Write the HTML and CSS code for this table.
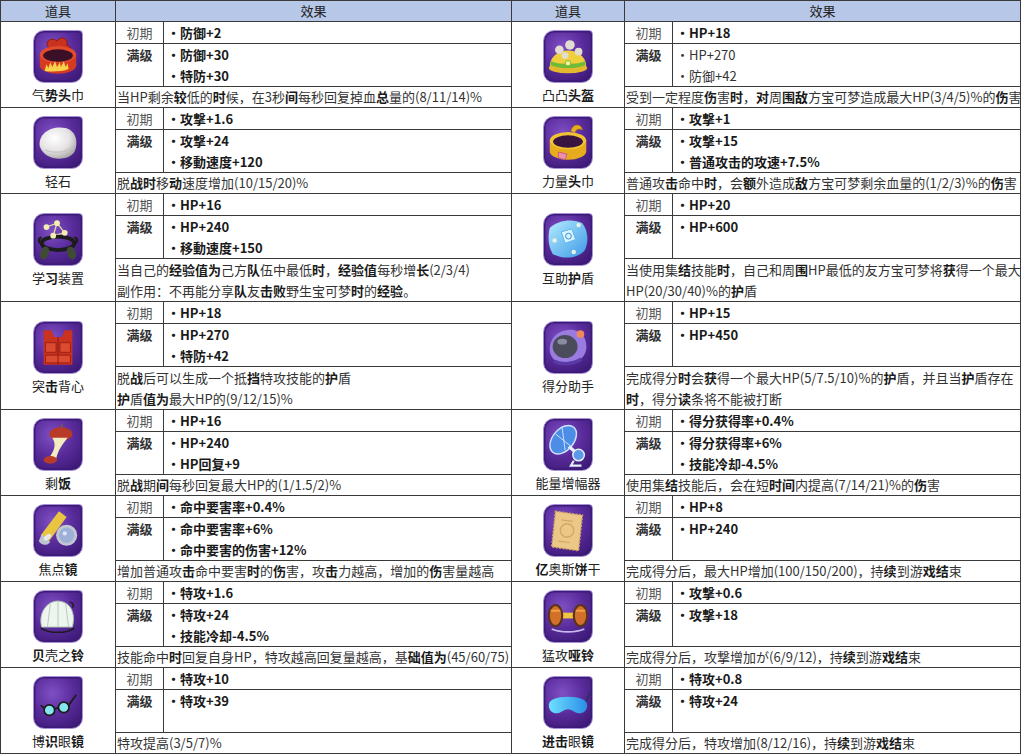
FILE: index.html
```html
<!DOCTYPE html>
<html lang="zh-CN">
<head>
<meta charset="utf-8">
<title>道具效果</title>
<link rel="stylesheet" href="styles.css">
</head>
<body>
<div class="page">

<section class="half left">
  <div class="head"><div>道具</div><div>效果</div></div>

  <div class="item">
    <div class="thumb">
      <div class="icon"><svg viewBox="0 0 50 52"><path d="M15 17c-5-7 4-12 9-7 3-6 13-3 10 4 6 1 5 8-1 8" fill="#c8321f" stroke="#8d1a10" stroke-width="1"/><path d="M6 24v11a19 9 0 0 0 38 0V24z" fill="#d63b22"/><ellipse cx="25" cy="24" rx="19" ry="9" fill="#e24a2c"/><ellipse cx="25" cy="25" rx="15.5" ry="6.5" fill="#3b0f26"/><path d="M11 41l2-7 2 4 2-6 2 5 3-6 2 6 3-5 1 5 3-6 2 6 2-4 1 6c-7 3-19 3-25 2z" fill="#f7d24a"/></svg></div>
      <div class="name">气<b>势头</b>巾</div>
    </div>
    <div class="lab">初期</div><div class="val">・防御+2</div>
    <div class="lab"><b>满级</b></div><div class="val">・防御+30<br>・特防+30</div>
    <div class="desc">当HP剩余<b>较</b>低的<b>时</b>候，在3秒<b>间</b>每秒回复掉血<b>总</b>量的(8/11/14)%</div>
  </div>

  <div class="item">
    <div class="thumb">
      <div class="icon"><svg viewBox="0 0 50 52"><defs><radialGradient id="st" cx="40%" cy="35%" r="70%"><stop offset="0" stop-color="#ffffff"/><stop offset="0.6" stop-color="#e4e2e2"/><stop offset="1" stop-color="#a9a6a8"/></radialGradient></defs><path d="M6 30C4 16 19 8 33 11c12 3 13 17 9 25-6 10-31 10-36-6z" fill="url(#st)"/><path d="M12 34c7 3 18 3 25-1" stroke="#c9c6c8" stroke-width="1.5" fill="none"/></svg></div>
      <div class="name">轻石</div>
    </div>
    <div class="lab">初期</div><div class="val">・攻撃+1.6</div>
    <div class="lab"><b>满级</b></div><div class="val">・攻撃+24<br>・移動速度+120</div>
    <div class="desc">脱<b>战时</b>移<b>动</b>速度增加(10/15/20)%</div>
  </div>

  <div class="item tall">
    <div class="thumb">
      <div class="icon"><svg viewBox="0 0 50 52"><g stroke="#e8e2a0" stroke-width="1.3"><path d="M13 13L24 9L20 22L32 19L24 9" fill="none"/></g><ellipse cx="25" cy="30" rx="17" ry="7" fill="none" stroke="#1c1c1c" stroke-width="4"/><circle cx="13" cy="13" r="3" fill="#f3eeb2"/><circle cx="24" cy="9" r="3" fill="#f3eeb2"/><circle cx="20" cy="22" r="3" fill="#f3eeb2"/><circle cx="32" cy="19" r="3" fill="#f3eeb2"/><ellipse cx="11" cy="40" rx="4.5" ry="7" fill="#3f4b35" transform="rotate(20 11 40)"/><ellipse cx="39" cy="40" rx="4.5" ry="7" fill="#3f4b35" transform="rotate(-20 39 40)"/><path d="M8 24c-3 0-4 4-1 6M42 24c3 0 4 4 1 6" stroke="#1c1c1c" stroke-width="2.5" fill="none"/></svg></div>
      <div class="name">学<b>习</b>装置</div>
    </div>
    <div class="lab">初期</div><div class="val">・HP+16</div>
    <div class="lab"><b>满级</b></div><div class="val">・HP+240<br>・移動速度+150</div>
    <div class="desc">当自己的<b>经验值为</b>己方<b>队</b>伍中最低<b>时</b>，<b>经验值</b>每秒增<b>长</b>(2/3/4)<br>副作用：不再能分享<b>队</b>友<b>击败</b>野生宝可梦<b>时</b>的<b>经验</b>。</div>
  </div>

  <div class="item tall">
    <div class="thumb">
      <div class="icon"><svg viewBox="0 0 50 52"><path d="M10 8h8l3 7h8l3-7h8v36H10z" fill="#c8321f"/><path d="M12 21h11v10H12zM27 21h11v10H27zM12 34h26v8H12z" fill="#dc4a30" stroke="#8d1a10" stroke-width="0.8"/><path d="M25 15v29" stroke="#8d1a10" stroke-width="1"/></svg></div>
      <div class="name">突<b>击</b>背心</div>
    </div>
    <div class="lab">初期</div><div class="val">・HP+18</div>
    <div class="lab"><b>满级</b></div><div class="val">・HP+270<br>・特防+42</div>
    <div class="desc">脱<b>战</b>后可以生成一个抵<b>挡</b>特攻技能的<b>护</b>盾<br><b>护</b>盾<b>值为</b>最大HP的(9/12/15)%</div>
  </div>

  <div class="item">
    <div class="thumb">
      <div class="icon"><svg viewBox="0 0 50 52"><path d="M29 5c0 3 0 5-2 7" stroke="#7a5a3a" stroke-width="1.5" fill="none"/><ellipse cx="28" cy="15" rx="12" ry="7" fill="#b83a28"/><path d="M19 19c4 6 3 12-2 19l-3 4h9c1-7 4-13 12-23z" fill="#f3ecc0"/><ellipse cx="17" cy="42" rx="7" ry="4" fill="#b83a28"/></svg></div>
      <div class="name">剩<b>饭</b></div>
    </div>
    <div class="lab">初期</div><div class="val">・HP+16</div>
    <div class="lab"><b>满级</b></div><div class="val">・HP+240<br>・HP回复+9</div>
    <div class="desc">脱<b>战</b>期<b>间</b>每秒回复最大HP的(1/1.5/2)%</div>
  </div>

  <div class="item">
    <div class="thumb">
      <div class="icon"><svg viewBox="0 0 50 52"><path d="M7 31L26 6l8 6-19 26z" fill="#e8c440"/><path d="M8 30l9 8c-4 5-10 3-12-1z" fill="#bcc4cf"/><ellipse cx="14" cy="33" rx="4.5" ry="2.5" fill="#e6eaf0" transform="rotate(-40 14 33)"/><circle cx="34" cy="31" r="11" fill="#c2c8d2"/><circle cx="34" cy="31" r="8" fill="#9fb0d8"/><circle cx="32" cy="29" r="2.2" fill="#dfe7f6"/></svg></div>
      <div class="name">焦点<b>镜</b></div>
    </div>
    <div class="lab">初期</div><div class="val">・命中要害率+0.4%</div>
    <div class="lab"><b>满级</b></div><div class="val">・命中要害率+6%<br>・命中要害的<b>伤</b>害+12%</div>
    <div class="desc">增加普通攻<b>击</b>命中要害<b>时</b>的<b>伤</b>害，攻<b>击</b>力越高，增加的<b>伤</b>害量越高</div>
  </div>

  <div class="item">
    <div class="thumb">
      <div class="icon"><svg viewBox="0 0 50 52"><path d="M8 37C4 21 15 9 26 10c11 1 18 11 14 27z" fill="#eef4ee" stroke="#a9c3b0" stroke-width="1"/><path d="M25 11v26M17 13l-3 24M33 13l3 24" stroke="#b5cbb9" stroke-width="1" fill="none"/><path d="M7 38c9 6 27 6 35 0" stroke="#1c1c1c" stroke-width="1.6" fill="none"/><path d="M37 11c4 0 5 4 3 6" stroke="#1c1c1c" stroke-width="1.5" fill="none"/></svg></div>
      <div class="name"><b>贝</b>壳之<b>铃</b></div>
    </div>
    <div class="lab">初期</div><div class="val">・特攻+1.6</div>
    <div class="lab"><b>满级</b></div><div class="val">・特攻+24<br>・技能冷却-4.5%</div>
    <div class="desc">技能命中<b>时</b>回复自身HP，特攻越高回复量越高，基<b>础值为</b>(45/60/75)</div>
  </div>

  <div class="item">
    <div class="thumb">
      <div class="icon"><svg viewBox="0 0 50 52"><path d="M21 33l5-2M11 32l-4-3M36 29l8-11" stroke="#1c1c1c" stroke-width="1.8" fill="none"/><circle cx="16" cy="34" r="5.5" fill="#86e6ee" stroke="#1c1c1c" stroke-width="1.8"/><circle cx="31" cy="31" r="5.5" fill="#86e6ee" stroke="#1c1c1c" stroke-width="1.8"/></svg></div>
      <div class="name">博<b>识</b>眼<b>镜</b></div>
    </div>
    <div class="lab">初期</div><div class="val">・特攻+10</div>
    <div class="lab"><b>满级</b></div><div class="val">・特攻+39</div>
    <div class="desc">特攻提高(3/5/7)%</div>
  </div>
</section>

<section class="half right">
  <div class="head"><div>道具</div><div>效果</div></div>

  <div class="item">
    <div class="thumb">
      <div class="icon"><svg viewBox="0 0 50 52"><path d="M6 37C6 14 44 14 44 37z" fill="#f0cf3c"/><ellipse cx="25" cy="38" rx="20" ry="5.5" fill="#e4b82c"/><path d="M7 31c11 4 25 4 36 0v4c-11 4-25 4-36 0z" fill="#6cbc3a"/><circle cx="25" cy="33" r="2.8" fill="#f7f3a0" stroke="#6cbc3a"/><circle cx="16" cy="19" r="4.5" fill="#e2ddd0"/><circle cx="27" cy="14" r="5" fill="#e2ddd0"/><circle cx="36" cy="21" r="4" fill="#e2ddd0"/><circle cx="22" cy="25" r="3.5" fill="#e2ddd0"/></svg></div>
      <div class="name">凸凸<b>头盔</b></div>
    </div>
    <div class="lab">初期</div><div class="val">・HP+18</div>
    <div class="lab"><b>满级</b></div><div class="val norm">・HP+270<br>・防御+42</div>
    <div class="desc">受到一定程度<b>伤</b>害<b>时</b>，<b>对</b>周<b>围敌</b>方宝可梦造成最大HP(3/4/5)%的<b>伤</b>害</div>
  </div>

  <div class="item">
    <div class="thumb">
      <div class="icon"><svg viewBox="0 0 50 52"><path d="M28 14c2-8 11-8 12-1-3-2-7-1-8 3" fill="#e8b020" stroke="#a8780c" stroke-width="0.8"/><path d="M6 24v11a19 9 0 0 0 38 0V24z" fill="#e6ac1e"/><ellipse cx="25" cy="24" rx="19" ry="9" fill="#f2c232"/><ellipse cx="25" cy="25" rx="15.5" ry="6.5" fill="#3a1440"/><path d="M15 36l9 2-2 6-7-2z" fill="#ee8fb0" stroke="#c04a70" stroke-width="0.8"/></svg></div>
      <div class="name">力量<b>头</b>巾</div>
    </div>
    <div class="lab">初期</div><div class="val">・攻撃+1</div>
    <div class="lab"><b>满级</b></div><div class="val">・攻撃+15<br>・普通攻<b>击</b>的攻速+7.5%</div>
    <div class="desc">普通攻<b>击</b>命中<b>时</b>，会<b>额</b>外造成<b>敌</b>方宝可梦剩余血量的(1/2/3)%的<b>伤</b>害</div>
  </div>

  <div class="item tall">
    <div class="thumb">
      <div class="icon"><svg viewBox="0 0 50 52"><defs><linearGradient id="sh" x1="0" y1="0" x2="1" y2="1"><stop offset="0" stop-color="#b4ecff"/><stop offset="1" stop-color="#3c98e6"/></linearGradient></defs><path d="M6 14C14 6 30 4 40 9c6 8 7 20 2 29-8 8-22 9-33 3C4 33 4 22 6 14z" fill="url(#sh)"/><path d="M18 18l11-3 4 11-11 4z" fill="#d8f4ff" stroke="#5fb4ec"/><circle cx="25.5" cy="22.5" r="3" fill="none" stroke="#3a86d0"/><circle cx="11" cy="27" r="2.3" fill="#e8f4e0"/><circle cx="36" cy="11" r="2.3" fill="#e8f4e0"/><circle cx="31" cy="39" r="2.3" fill="#e8f4e0"/></svg></div>
      <div class="name">互助<b>护</b>盾</div>
    </div>
    <div class="lab">初期</div><div class="val">・HP+20</div>
    <div class="lab"><b>满级</b></div><div class="val">・HP+600</div>
    <div class="desc">当使用集<b>结</b>技能<b>时</b>，自己和周<b>围</b>HP最低的友方宝可梦将<b>获</b>得一个最大<br>HP(20/30/40)%的<b>护</b>盾</div>
  </div>

  <div class="item tall">
    <div class="thumb">
      <div class="icon"><svg viewBox="0 0 50 52"><path d="M6 28C6 12 21 6 32 8c9 2 13 11 12 20-2 11-13 16-23 15C12 42 6 36 6 28z" fill="#9a7ce0"/><ellipse cx="22" cy="25" rx="13" ry="12" fill="#4a4c5c"/><ellipse cx="19" cy="20" rx="5" ry="3" fill="#8a8ca0"/><circle cx="38" cy="12" r="4" fill="#f08a5a"/><path d="M10 40c7 4 20 4 29-2" stroke="#5a3aa8" stroke-width="3.5" fill="none"/></svg></div>
      <div class="name">得分助手</div>
    </div>
    <div class="lab">初期</div><div class="val">・HP+15</div>
    <div class="lab"><b>满级</b></div><div class="val">・HP+450</div>
    <div class="desc">完成得分<b>时</b>会<b>获</b>得一个最大HP(5/7.5/10)%的<b>护</b>盾，并且当<b>护</b>盾存在<br><b>时</b>，得分<b>读</b>条将不能被打断</div>
  </div>

  <div class="item">
    <div class="thumb">
      <div class="icon"><svg viewBox="0 0 50 52"><ellipse cx="20" cy="21" rx="11" ry="17" fill="#4c8ee6" stroke="#cfe2ff" stroke-width="1.5" transform="rotate(40 20 21)"/><path d="M12 15l15 12M19 9l3 23" stroke="#cfe2ff" stroke-width="1"/><path d="M26 28l8 7" stroke="#e8eef8" stroke-width="3.5"/><circle cx="36" cy="37" r="6" fill="#5a9ae8" stroke="#e8eef8" stroke-width="1.5"/><path d="M31 43l-3 5h11" stroke="#e8eef8" stroke-width="2.2" fill="none"/></svg></div>
      <div class="name">能量增幅器</div>
    </div>
    <div class="lab">初期</div><div class="val">・得分<b>获</b>得率+0.4%</div>
    <div class="lab"><b>满级</b></div><div class="val">・得分<b>获</b>得率+6%<br>・技能冷却-4.5%</div>
    <div class="desc">使用集<b>结</b>技能后，会在短<b>时间</b>内提高(7/14/21)%的<b>伤</b>害</div>
  </div>

  <div class="item">
    <div class="thumb">
      <div class="icon"><svg viewBox="0 0 50 52"><path d="M12 6l28 4-4 37-28-4z" fill="#ebc888" stroke="#d4a860" stroke-width="1.6" stroke-dasharray="2 1.5"/><circle cx="24" cy="26" r="7" fill="none" stroke="#d2a860" stroke-width="1.4"/><path d="M18 15l12 1.5M15 37l12 1.5" stroke="#d2a860" stroke-width="1.2"/></svg></div>
      <div class="name"><b>亿</b>奥斯<b>饼</b>干</div>
    </div>
    <div class="lab">初期</div><div class="val">・HP+8</div>
    <div class="lab"><b>满级</b></div><div class="val">・HP+240</div>
    <div class="desc">完成得分后，最大HP增加(100/150/200)，持<b>续</b>到游<b>戏结</b>束</div>
  </div>

  <div class="item">
    <div class="thumb">
      <div class="icon"><svg viewBox="0 0 50 52"><path d="M18 25h14" stroke="#f2c640" stroke-width="6"/><ellipse cx="12" cy="25" rx="7" ry="11" fill="#d2702a" stroke="#5a3418" stroke-width="2.2"/><ellipse cx="38" cy="25" rx="7" ry="11" fill="#d2702a" stroke="#5a3418" stroke-width="2.2"/><path d="M7 20h10M33 20h10" stroke="#f0a040" stroke-width="2"/><path d="M8 39c9 4 25 4 34 0" stroke="#c8b8ee" stroke-width="1.6" fill="none"/></svg></div>
      <div class="name">猛攻<b>哑铃</b></div>
    </div>
    <div class="lab">初期</div><div class="val">・攻撃+0.6</div>
    <div class="lab"><b>满级</b></div><div class="val">・攻撃+18</div>
    <div class="desc">完成得分后，攻撃增加が(6/9/12)，持<b>续</b>到游<b>戏结</b>束</div>
  </div>

  <div class="item">
    <div class="thumb">
      <div class="icon"><svg viewBox="0 0 50 52"><defs><linearGradient id="vz" x1="0" y1="0" x2="1" y2="0"><stop offset="0" stop-color="#6ee0ff"/><stop offset="1" stop-color="#2a8ee6"/></linearGradient></defs><path d="M5 29c0-6 8-9 20-9s20 3 20 9c0 6-5 9-10 8-4-1-6-4-10-4s-6 3-10 4c-5 1-10-2-10-8z" fill="url(#vz)"/><path d="M44 25l4-10" stroke="#3a2a6a" stroke-width="2.2"/></svg></div>
      <div class="name"><b>进击</b>眼<b>镜</b></div>
    </div>
    <div class="lab">初期</div><div class="val">・特攻+0.8</div>
    <div class="lab"><b>满级</b></div><div class="val">・特攻+24</div>
    <div class="desc">完成得分后，特攻增加(8/12/16)，持<b>续</b>到游<b>戏结</b>束</div>
  </div>
</section>

</div>
</body>
</html>
```

FILE: styles.css
```css
* { box-sizing: border-box; }

body {
  margin: 0;
  background: #ffffff;
  font-family: "Noto Sans CJK SC", "Noto Sans", sans-serif;
  font-size: 13px;
  color: #333333;
}

b { font-weight: 700; color: #1a1a1a; }

.page {
  display: flex;
  align-items: flex-start;
}

.half {
  display: flex;
  flex-direction: column;
  gap: 1px;
  background: #3a3a3a;
  border: 1px solid #3a3a3a;
}

.half.left { width: 512px; --c1: 114px; }
.half.right { width: 509px; border-left: none; --c1: 112px; }

.head {
  display: grid;
  grid-template-columns: var(--c1) 1fr;
  gap: 1px;
  height: 20px;
}

.head > div {
  background: #b6c7e7;
  text-align: center;
  line-height: 20px;
  color: #222222;
}

.item {
  display: grid;
  grid-template-columns: var(--c1) 47px 1fr;
  grid-template-rows: 21px 42px 20px;
  gap: 1px;
}

.item.tall { grid-template-rows: 21px 42px 42px; }

.item > div { background: #ffffff; }

.thumb {
  grid-row: 1 / 4;
  display: flex;
  flex-direction: column;
  align-items: center;
  justify-content: center;
  gap: 3px;
  padding-top: 3px;
}

.icon {
  width: 50px;
  height: 53px;
  border-radius: 11px 4px 11px 11px;
  border: 1.5px solid #a890d8;
  background: radial-gradient(circle at 38% 32%, #7e50c4 0%, #5a2c9c 45%, #34146c 100%);
  box-shadow: inset 0 0 0 1.5px #3c1b76;
}

.icon svg { display: block; width: 100%; height: 100%; }

.name {
  line-height: 17px;
  font-size: 13px;
  color: #222222;
}

.lab {
  text-align: center;
  line-height: 21px;
  color: #555555;
}

.lab b { color: #333333; }

.val {
  padding-left: 3px;
  line-height: 21px;
  font-weight: 700;
  color: #1a1a1a;
  white-space: nowrap;
}

.val.norm { font-weight: 400; color: #333333; }

.desc {
  grid-column: 2 / 4;
  padding-left: 1px;
  line-height: 20px;
  white-space: nowrap;
  overflow: hidden;
  color: #333333;
}

.item.tall .desc { line-height: 21px; }
```
